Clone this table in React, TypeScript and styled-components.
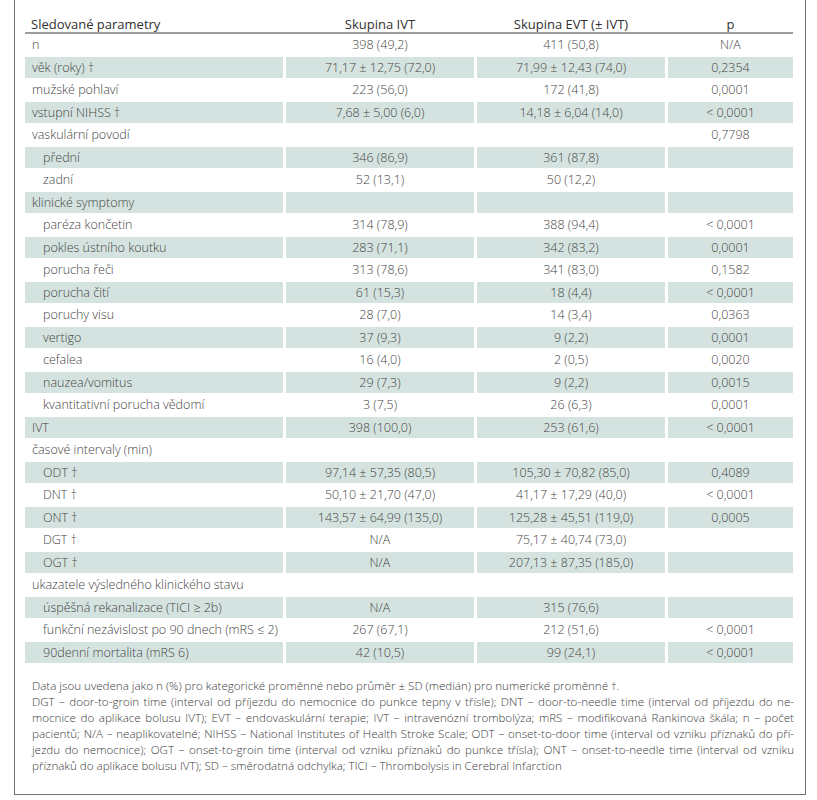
import React from "react";
import styled, { createGlobalStyle } from "styled-components";

const GlobalStyle = createGlobalStyle`
  html, body {
    margin: 0;
    padding: 0;
    background: #ffffff;
  }
  body {
    font-family: "Open Sans", "Liberation Sans", sans-serif;
  }
`;

const Frame = styled.div`
  box-sizing: border-box;
  width: 792px;
  margin-left: 14px;
  border: 1px solid #707070;
  border-top: none;
  padding: 0 11px 20px 10px;
`;

const Table = styled.div`
  width: 768px;
  display: flex;
  flex-direction: column;
`;

const GRID = "258px 188px 188px 125px";

const HeaderRow = styled.div`
  display: grid;
  grid-template-columns: ${GRID};
  column-gap: 3px;
  height: 32px;
  align-items: end;
  border-bottom: 2px solid #9c9c9c;
`;

const HeadCell = styled.div<{ $left?: boolean }>`
  font-size: 13px;
  line-height: 16px;
  color: #303030;
  font-weight: 400;
  text-align: ${(p) => (p.$left ? "left" : "center")};
  padding-left: ${(p) => (p.$left ? "6px" : "0")};
`;

const Rows = styled.div`
  display: flex;
  flex-direction: column;
  row-gap: 1.5px;
`;

const Row = styled.div`
  display: grid;
  grid-template-columns: ${GRID};
  column-gap: 3px;
  height: 21px;
`;

const Cell = styled.div<{ $shaded: boolean; $label?: boolean; $indent?: boolean }>`
  background: ${(p) => (p.$shaded ? "#d4e3df" : "transparent")};
  font-size: 12.5px;
  font-weight: 300;
  color: #454545;
  line-height: 21px;
  white-space: nowrap;
  text-align: ${(p) => (p.$label ? "left" : "center")};
  padding-left: ${(p) => (p.$label ? (p.$indent ? "18px" : "7px") : "0")};
`;

const Notes = styled.div`
  margin-top: 15px;
  padding-left: 7px;
  font-size: 11.6px;
  line-height: 16px;
  font-weight: 300;
  color: #3c3c3c;
`;

const NoteLine = styled.div<{ $justify?: boolean }>`
  white-space: ${(p) => (p.$justify ? "normal" : "nowrap")};
  text-align: ${(p) => (p.$justify ? "justify" : "left")};
  text-align-last: ${(p) => (p.$justify ? "justify" : "left")};
  word-spacing: ${(p) => (p.$justify ? "-1px" : "0")};
`;

type R = { label: string; a?: string; b?: string; p?: string; indent?: boolean };

const rows: R[] = [
  { label: "n", a: "398 (49,2)", b: "411 (50,8)", p: "N/A" },
  { label: "věk (roky) †", a: "71,17 ± 12,75 (72,0)", b: "71,99 ± 12,43 (74,0)", p: "0,2354" },
  { label: "mužské pohlaví", a: "223 (56,0)", b: "172 (41,8)", p: "0,0001" },
  { label: "vstupní NIHSS †", a: "7,68 ± 5,00 (6,0)", b: "14,18 ± 6,04 (14,0)", p: "< 0,0001" },
  { label: "vaskulární povodí", p: "0,7798" },
  { label: "přední", a: "346 (86,9)", b: "361 (87,8)", indent: true },
  { label: "zadní", a: "52 (13,1)", b: "50 (12,2)", indent: true },
  { label: "klinické symptomy" },
  { label: "paréza končetin", a: "314 (78,9)", b: "388 (94,4)", p: "< 0,0001", indent: true },
  { label: "pokles ústního koutku", a: "283 (71,1)", b: "342 (83,2)", p: "0,0001", indent: true },
  { label: "porucha řeči", a: "313 (78,6)", b: "341 (83,0)", p: "0,1582", indent: true },
  { label: "porucha čití", a: "61 (15,3)", b: "18 (4,4)", p: "< 0,0001", indent: true },
  { label: "poruchy visu", a: "28 (7,0)", b: "14 (3,4)", p: "0,0363", indent: true },
  { label: "vertigo", a: "37 (9,3)", b: "9 (2,2)", p: "0,0001", indent: true },
  { label: "cefalea", a: "16 (4,0)", b: "2 (0,5)", p: "0,0020", indent: true },
  { label: "nauzea/vomitus", a: "29 (7,3)", b: "9 (2,2)", p: "0,0015", indent: true },
  { label: "kvantitativní porucha vědomí", a: "3 (7,5)", b: "26 (6,3)", p: "0,0001", indent: true },
  { label: "IVT", a: "398 (100,0)", b: "253 (61,6)", p: "< 0,0001" },
  { label: "časové intervaly (min)" },
  { label: "ODT †", a: "97,14 ± 57,35 (80,5)", b: "105,30 ± 70,82 (85,0)", p: "0,4089", indent: true },
  { label: "DNT †", a: "50,10 ± 21,70 (47,0)", b: "41,17 ± 17,29 (40,0)", p: "< 0,0001", indent: true },
  { label: "ONT †", a: "143,57 ± 64,99 (135,0)", b: "125,28 ± 45,51 (119,0)", p: "0,0005", indent: true },
  { label: "DGT †", a: "N/A", b: "75,17 ± 40,74 (73,0)", indent: true },
  { label: "OGT †", a: "N/A", b: "207,13 ± 87,35 (185,0)", indent: true },
  { label: "ukazatele výsledného klinického stavu" },
  { label: "úspěšná rekanalizace (TICI ≥ 2b)", a: "N/A", b: "315 (76,6)", indent: true },
  { label: "funkční nezávislost po 90 dnech (mRS ≤ 2)", a: "267 (67,1)", b: "212 (51,6)", p: "< 0,0001", indent: true },
  { label: "90denní mortalita (mRS 6)", a: "42 (10,5)", b: "99 (24,1)", p: "< 0,0001", indent: true },
];

const notes = [
  "DGT – door-to-groin time (interval od příjezdu do nemocnice do punkce tepny v třísle); DNT – door-to-needle time (interval od příjezdu do ne-",
  "mocnice do aplikace bolusu IVT); EVT – endovaskulární terapie; IVT – intravenózní trombolýza; mRS – modifikovaná Rankinova škála; n – počet",
  "pacientů; N/A – neaplikovatelné; NIHSS – National Institutes of Health Stroke Scale; ODT – onset-to-door time (interval od vzniku příznaků do pří-",
  "jezdu do nemocnice); OGT – onset-to-groin time (interval od vzniku příznaků do punkce třísla); ONT – onset-to-needle time (interval od vzniku",
];

export default function App() {
  return (
    <>
      <GlobalStyle />
      <Frame>
        <Table>
          <HeaderRow>
            <HeadCell $left>Sledované parametry</HeadCell>
            <HeadCell>Skupina IVT</HeadCell>
            <HeadCell>Skupina EVT (± IVT)</HeadCell>
            <HeadCell>p</HeadCell>
          </HeaderRow>
          <Rows>
            {rows.map((r, i) => {
              const s = i % 2 === 1;
              return (
                <Row key={i}>
                  <Cell $shaded={s} $label $indent={r.indent}>
                    {r.label}
                  </Cell>
                  <Cell $shaded={s}>{r.a ?? ""}</Cell>
                  <Cell $shaded={s}>{r.b ?? ""}</Cell>
                  <Cell $shaded={s}>{r.p ?? ""}</Cell>
                </Row>
              );
            })}
          </Rows>
        </Table>
        <Notes>
          <NoteLine>
            Data jsou uvedena jako n (%) pro kategorické proměnné nebo průměr ± SD (medián) pro numerické proměnné †.
          </NoteLine>
          {notes.map((n, i) => (
            <NoteLine key={i} $justify>
              {n}
            </NoteLine>
          ))}
          <NoteLine>
            příznaků do aplikace bolusu IVT); SD – směrodatná odchylka; TICI – Thrombolysis in Cerebral Infarction
          </NoteLine>
        </Notes>
      </Frame>
    </>
  );
}
